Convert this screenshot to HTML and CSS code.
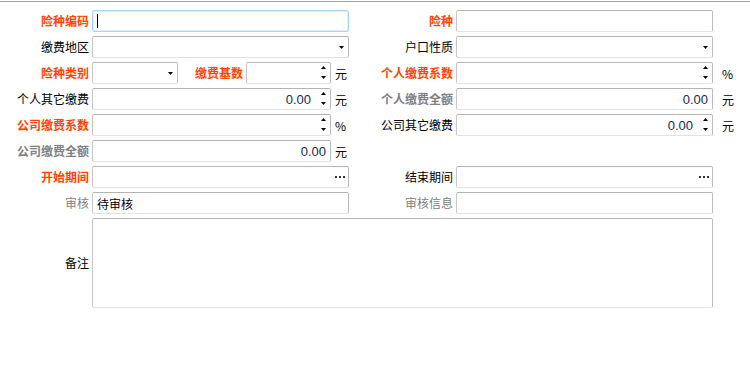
FILE: index.html
```html
<!DOCTYPE html>
<html lang="zh-CN">
<head>
<meta charset="utf-8">
<title>险种</title>
<link rel="stylesheet" href="styles.css">
</head>
<body>
<div class="panel">
  <div class="form">
    <!-- row 1 -->
    <div class="lbl req">险种编码</div>
    <div class="box focus"><span class="caret"></span></div>
    <div class="lbl req">险种</div>
    <div class="box"></div>
    <div class="unit"></div>

    <!-- row 2 -->
    <div class="lbl">缴费地区</div>
    <div class="box"><span class="val"></span><svg class="arrow" width="5" height="3" viewBox="0 0 5 3"><polygon points="0,0 5,0 2.5,3" fill="#000"/></svg></div>
    <div class="lbl">户口性质</div>
    <div class="box"><span class="val"></span><svg class="arrow" width="5" height="3" viewBox="0 0 5 3"><polygon points="0,0 5,0 2.5,3" fill="#000"/></svg></div>
    <div class="unit"></div>

    <!-- row 3 -->
    <div class="lbl req">险种类别</div>
    <div class="field">
      <div class="box sel"><span class="val"></span><svg class="arrow" width="5" height="3" viewBox="0 0 5 3"><polygon points="0,0 5,0 2.5,3" fill="#000"/></svg></div>
      <div class="lbl req inner">缴费基数</div>
      <div class="box base"><span class="val"></span><svg class="spin" width="5" height="14" viewBox="0 0 5 14"><polygon points="0,3 2.5,0 5,3" fill="#000"/><polygon points="0,10 5,10 2.5,13" fill="#000"/></svg></div>
      <div class="sunit">元</div>
    </div>
    <div class="lbl req">个人缴费系数</div>
    <div class="box"><span class="val"></span><svg class="spin" width="5" height="14" viewBox="0 0 5 14"><polygon points="0,3 2.5,0 5,3" fill="#000"/><polygon points="0,10 5,10 2.5,13" fill="#000"/></svg></div>
    <div class="unit">%</div>

    <!-- row 4 -->
    <div class="lbl">个人其它缴费</div>
    <div class="field">
      <div class="box grow"><span class="val num">0.00</span><svg class="spin" width="5" height="14" viewBox="0 0 5 14"><polygon points="0,3 2.5,0 5,3" fill="#000"/><polygon points="0,10 5,10 2.5,13" fill="#000"/></svg></div>
      <div class="sunit">元</div>
    </div>
    <div class="lbl ro">个人缴费全额</div>
    <div class="box"><span class="val num">0.00</span></div>
    <div class="unit">元</div>

    <!-- row 5 -->
    <div class="lbl req">公司缴费系数</div>
    <div class="field">
      <div class="box grow"><span class="val"></span><svg class="spin" width="5" height="14" viewBox="0 0 5 14"><polygon points="0,3 2.5,0 5,3" fill="#000"/><polygon points="0,10 5,10 2.5,13" fill="#000"/></svg></div>
      <div class="sunit">%</div>
    </div>
    <div class="lbl">公司其它缴费</div>
    <div class="box"><span class="val num">0.00</span><svg class="spin" width="5" height="14" viewBox="0 0 5 14"><polygon points="0,3 2.5,0 5,3" fill="#000"/><polygon points="0,10 5,10 2.5,13" fill="#000"/></svg></div>
    <div class="unit">元</div>

    <!-- row 6 -->
    <div class="lbl ro">公司缴费全额</div>
    <div class="field">
      <div class="box grow"><span class="val num">0.00</span></div>
      <div class="sunit">元</div>
    </div>
    <div class="empty"></div>
    <div class="empty"></div>
    <div class="empty"></div>

    <!-- row 7 -->
    <div class="lbl req">开始期间</div>
    <div class="box"><span class="val"></span><svg class="dots" width="10" height="2" viewBox="0 0 10 2"><rect x="0" y="0" width="2" height="2" fill="#333"/><rect x="4" y="0" width="2" height="2" fill="#333"/><rect x="8" y="0" width="2" height="2" fill="#333"/></svg></div>
    <div class="lbl">结束期间</div>
    <div class="box"><span class="val"></span><svg class="dots" width="10" height="2" viewBox="0 0 10 2"><rect x="0" y="0" width="2" height="2" fill="#333"/><rect x="4" y="0" width="2" height="2" fill="#333"/><rect x="8" y="0" width="2" height="2" fill="#333"/></svg></div>
    <div class="unit"></div>

    <!-- row 8 -->
    <div class="lbl dim">审核</div>
    <div class="box"><span class="txt">待审核</span></div>
    <div class="lbl dim">审核信息</div>
    <div class="box"></div>
    <div class="unit"></div>

    <!-- row 9 -->
    <div class="lbl">备注</div>
    <div class="box memo"></div>
    <div class="unit"></div>
  </div>
</div>
</body>
</html>
```

FILE: styles.css
```css
html, body {
  margin: 0;
  padding: 0;
  background: #fff;
}

body {
  font-family: "Noto Sans CJK SC", "Liberation Sans", sans-serif;
  font-size: 12px;
  color: #000;
}

.panel {
  margin-top: 1px;
  border-top: 1px solid #a0a0a0;
  padding-top: 8px;
}

.form {
  display: grid;
  grid-template-columns: 89px 257px 101px 257px 1fr;
  grid-template-rows: repeat(8, 22px) 90px;
  column-gap: 3px;
  row-gap: 4px;
}

.lbl {
  display: flex;
  align-items: center;
  justify-content: flex-end;
  white-space: nowrap;
  line-height: 1;
}

.lbl.req {
  color: #ff4500;
  font-weight: bold;
}

.lbl.ro {
  color: #808080;
  font-weight: bold;
}

.lbl.dim {
  color: #808080;
}

.box {
  box-sizing: border-box;
  border: 1px solid;
  border-color: #b4b4b4 #bcbcbc #e2e2e2 #c8c8c8;
  border-radius: 2px;
  background: #fff;
  display: flex;
  align-items: center;
  padding: 0 4px;
}

.box.focus {
  border-color: #a9d5f3;
  box-shadow: inset 0 0 0 1px #dcf0fc;
}

.caret {
  display: block;
  width: 1px;
  height: 14px;
  background: #000;
}

.val {
  flex: 1;
  text-align: right;
}

.num {
  font-family: "Liberation Sans", Arial, sans-serif;
  font-size: 13px;
  color: #1c2a4a;
}

.spin {
  display: block;
  margin-left: 10px;
  flex: none;
}

.arrow,
.dots {
  display: block;
  flex: none;
}

.box .dots {
  margin-right: -1px;
}

.txt {
  color: #000;
}

.field {
  display: flex;
  align-items: stretch;
}

.field .grow {
  flex: 1;
}

.field .sel {
  width: 86px;
}

.field .inner {
  flex: 1;
  padding-right: 3px;
}

.field .base {
  width: 85px;
}

.sunit {
  width: 18px;
  box-sizing: border-box;
  padding-left: 4px;
  display: flex;
  align-items: center;
}

.unit {
  display: flex;
  align-items: center;
  padding-left: 6px;
}

.memo {
  grid-column: 2 / 5;
}
```
